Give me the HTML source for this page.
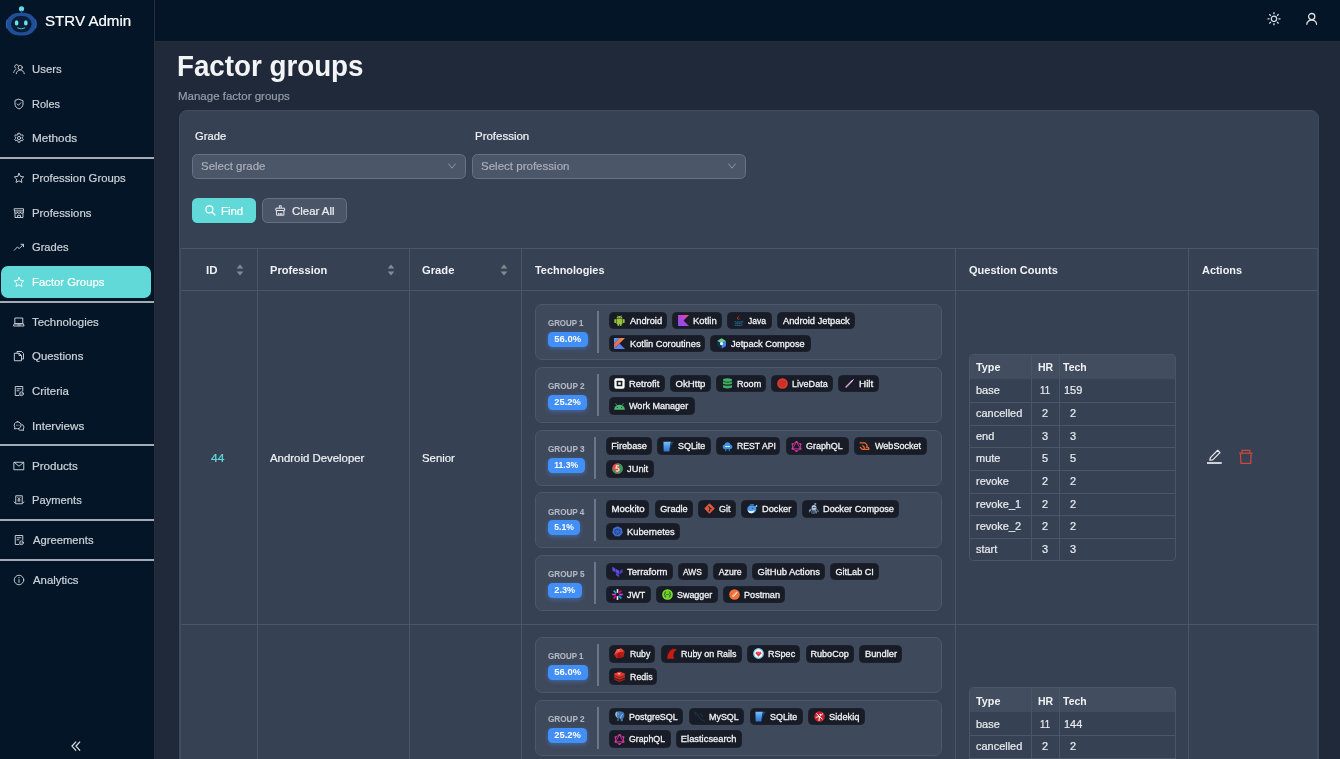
<!DOCTYPE html><html lang="en"><head><meta charset="utf-8"><title>Factor groups - STRV Admin</title><style>
html,body{margin:0;padding:0}
#app{position:absolute;left:0;top:0;width:1340px;height:759px;overflow:hidden;will-change:transform}
body{width:1340px;height:759px;overflow:hidden;background:#20293a;font-family:"Liberation Sans",sans-serif;position:relative}
.b{position:absolute;box-sizing:content-box}
.t{position:absolute;white-space:nowrap;line-height:1;display:block;transform-origin:0 50%;-webkit-text-stroke:0.22px currentColor}
.tag{display:inline-flex;align-items:center;box-sizing:content-box;height:15.6px;margin-right:5.2px;background:#181c26;border:1px solid #1c212c;border-radius:4.5px;
 color:#f1f3f5;font-size:9.3px;line-height:15.6px;padding:0;white-space:nowrap;flex:none}
.tag .ti{margin-left:4.7px;flex:none}
.tag>span{display:inline-block;flex:none;position:relative;top:1px;-webkit-text-stroke:0.3px currentColor}
</style></head><body><div id="app"><div class="b" style="left:0px;top:0px;width:1340px;height:40.8px;background:#031526"></div>
<div class="b" style="left:0px;top:0px;width:154.2px;height:759px;background:#031526"></div>
<div class="b" style="left:154px;top:0px;width:1px;height:759px;background:#2b2d36"></div>
<div class="b" style="left:154px;top:40.9px;width:1186px;height:1px;background:#2b2d36"></div>
<div class="b" style="left:3.9px;top:3.6px;"><svg width="36" height="34" viewBox="0 0 36 34">
<circle cx="17.500" cy="4.800" r="2.600" fill="#5fdde6"/>
<rect x="16.900" y="6.500" width="1.200" height="3" fill="#2a5fa0"/>
<rect x="2.300" y="8.800" width="30" height="22.700" rx="13" ry="11.300" fill="#1f4f95"/>
<path d="M3.400 15.500a3 6 0 0 0 0 9M31.200 15.500a3 6 0 0 1 0 9" fill="none" stroke="#2b62b0" stroke-width="1.200"/>
<rect x="7" y="12.100" width="20.600" height="16.200" rx="9" ry="8" fill="#0b1d3a"/>
<ellipse cx="12.600" cy="18.900" rx="1.850" ry="2.700" fill="#63e6ea"/>
<ellipse cx="21.800" cy="18.900" rx="1.850" ry="2.700" fill="#63e6ea"/>
<path d="M13.600 24q3.600 1.900 7.200 0" fill="none" stroke="#36c9c0" stroke-width="1" stroke-linecap="round"/>
</svg></div>
<span class="t" style="left:44.72px;top:13.00px;font-size:15.2px;transform:scaleX(0.9948);color:#fff;">STRV Admin</span>
<div class="b" style="left:12.9px;top:63.099999999999994px;color:#cdd1d8;line-height:0"><svg width="12" height="12" viewBox="0 0 24 24" ><g fill="none" stroke="currentColor" stroke-width="1.9" stroke-linecap="round" stroke-linejoin="round"><circle cx="14.5" cy="9" r="4.2"/><path d="M6.5 21.5c.6-4.6 3.8-7.3 8-7.3s7.400 2.700 8 7.300"/><path d="M10 4.300a4 4 0 0 0-5.500 5.800"/><path d="M1.500 19c.3-3 1.800-5.300 4.600-6.400"/></g></svg></div>
<span class="t" style="left:31.75px;top:64.00px;font-size:11.8px;transform:scaleX(0.9627);color:#cdd1d8;">Users</span>
<div class="b" style="left:12.9px;top:97.7px;color:#cdd1d8;line-height:0"><svg width="12" height="12" viewBox="0 0 24 24" ><g fill="none" stroke="currentColor" stroke-width="1.9" stroke-linecap="round" stroke-linejoin="round"><path d="M12 2.500 20 5.500v6.500c0 5-3.300 8.300-8 9.800-4.700-1.500-8-4.800-8-9.800V5.500z"/><path d="M8.500 12l2.500 2.600 4.700-5"/></g></svg></div>
<span class="t" style="left:31.72px;top:99.00px;font-size:11.8px;transform:scaleX(0.9308);color:#cdd1d8;">Roles</span>
<div class="b" style="left:12.9px;top:132.2px;color:#cdd1d8;line-height:0"><svg width="12" height="12" viewBox="0 0 24 24" ><g fill="none" stroke="currentColor" stroke-width="1.9" stroke-linecap="round" stroke-linejoin="round"><circle cx="12" cy="12" r="3.200"/><path d="M10.300 2.500h3.400l.6 2.700 2 1.100 2.600-.9 1.700 3-2 1.900v2.300l2 1.900-1.700 3-2.600-.9-2 1.100-.6 2.700h-3.400l-.6-2.700-2-1.100-2.600.9-1.700-3 2-1.900v-2.300l-2-1.900 1.700-3 2.600.9 2-1.100z"/></g></svg></div>
<span class="t" style="left:31.66px;top:133.00px;font-size:11.8px;transform:scaleX(0.9955);color:#cdd1d8;">Methods</span>
<div class="b" style="left:12.9px;top:172.3px;color:#cdd1d8;line-height:0"><svg width="12" height="12" viewBox="0 0 24 24" ><g fill="none" stroke="currentColor" stroke-width="1.9" stroke-linecap="round" stroke-linejoin="round"><path d="M12 2.800l2.900 6 6.500.9-4.700 4.600 1.100 6.500L12 17.700l-5.800 3.100 1.100-6.500L2.600 9.700l6.500-.9z"/></g></svg></div>
<span class="t" style="left:31.69px;top:173.00px;font-size:11.8px;transform:scaleX(0.9590);color:#cdd1d8;">Profession Groups</span>
<div class="b" style="left:12.9px;top:206.8px;color:#cdd1d8;line-height:0"><svg width="12" height="12" viewBox="0 0 24 24" ><g fill="none" stroke="currentColor" stroke-width="1.9" stroke-linecap="round" stroke-linejoin="round"><path d="M3 3.500h18v6.200a3 3 0 0 1-6 0 3 3 0 0 1-6 0 3 3 0 0 1-6 0z"/><path d="M3.200 7.800h17.600"/><path d="M4 12v9h16v-9"/><path d="M9 21v-4.500h6V21"/></g></svg></div>
<span class="t" style="left:31.69px;top:208.00px;font-size:11.8px;transform:scaleX(0.9635);color:#cdd1d8;">Professions</span>
<div class="b" style="left:12.9px;top:241.3px;color:#cdd1d8;line-height:0"><svg width="12" height="12" viewBox="0 0 24 24" ><g fill="none" stroke="currentColor" stroke-width="1.9" stroke-linecap="round" stroke-linejoin="round"><path d="M2.500 18.500l6.300-6.500 3.700 3.200 8-8.200"/><path d="M16 6.500h5v5"/></g></svg></div>
<span class="t" style="left:32.04px;top:242.00px;font-size:11.8px;transform:scaleX(0.9443);color:#cdd1d8;">Grades</span>
<div class="b" style="left:0.8px;top:266.09999999999997px;width:150.2px;height:31.6px;background:#62d9d9;border-radius:7px"></div>
<div class="b" style="left:12.9px;top:275.9px;color:#fff;line-height:0"><svg width="12" height="12" viewBox="0 0 24 24" ><g fill="none" stroke="currentColor" stroke-width="1.9" stroke-linecap="round" stroke-linejoin="round"><path d="M12 2.800l2.900 6 6.500.9-4.700 4.600 1.100 6.500L12 17.700l-5.800 3.100 1.100-6.500L2.600 9.700l6.500-.9z"/></g></svg></div>
<span class="t" style="left:31.69px;top:277.00px;font-size:11.8px;transform:scaleX(0.9602);color:#fff;">Factor Groups</span>
<div class="b" style="left:12.9px;top:315.8px;color:#cdd1d8;line-height:0"><svg width="12" height="12" viewBox="0 0 24 24" ><g fill="none" stroke="currentColor" stroke-width="1.9" stroke-linecap="round" stroke-linejoin="round"><path d="M4.500 4h15v11.500h-15z"/><path d="M1.800 20h20.400l-1.500-4.500H3.300z"/><path d="M9.500 18h5"/></g></svg></div>
<span class="t" style="left:32.37px;top:317.00px;font-size:11.8px;transform:scaleX(0.9698);color:#cdd1d8;">Technologies</span>
<div class="b" style="left:12.9px;top:350.4px;color:#cdd1d8;line-height:0"><svg width="12" height="12" viewBox="0 0 24 24" ><g fill="none" stroke="currentColor" stroke-width="1.9" stroke-linecap="round" stroke-linejoin="round"><path d="M8 5.500V3h9l4 4v11h-4"/><path d="M3.500 6.500h9l4.500 4.500v10.500H3.500z"/><path d="M12 6.800V11h4.500"/></g></svg></div>
<span class="t" style="left:32.09px;top:351.00px;font-size:11.8px;transform:scaleX(0.9672);color:#cdd1d8;">Questions</span>
<div class="b" style="left:12.9px;top:384.9px;color:#cdd1d8;line-height:0"><svg width="12" height="12" viewBox="0 0 24 24" ><g fill="none" stroke="currentColor" stroke-width="1.9" stroke-linecap="round" stroke-linejoin="round"><path d="M12 21H4.500V3h15v9"/><path d="M8 7.500h8M8 11.500h4"/><circle cx="17" cy="17.500" r="3.800"/><path d="M15.500 17.500l1.200 1.200 2-2.200" stroke-width="1.300"/></g></svg></div>
<span class="t" style="left:32.03px;top:386.00px;font-size:11.8px;transform:scaleX(0.9704);color:#cdd1d8;">Criteria</span>
<div class="b" style="left:12.9px;top:419.5px;color:#cdd1d8;line-height:0"><svg width="12" height="12" viewBox="0 0 24 24" ><g fill="none" stroke="currentColor" stroke-width="1.9" stroke-linecap="round" stroke-linejoin="round"><path d="M9.500 3.500a7 7 0 0 0-5.800 10.900L3 18l3.500-1a7 7 0 1 0 3-13.500z"/><path d="M17.500 8.500a6 6 0 0 1 3 9.500l.5 3-3-1a6 6 0 0 1-6.500-.5"/><path d="M6.800 10.500h.1M9.500 10.500h.1M12.200 10.500h.1" stroke-width="1.500"/></g></svg></div>
<span class="t" style="left:31.55px;top:421.00px;font-size:11.8px;transform:scaleX(0.9840);color:#cdd1d8;">Interviews</span>
<div class="b" style="left:12.9px;top:459.5px;color:#cdd1d8;line-height:0"><svg width="12" height="12" viewBox="0 0 24 24" ><g fill="none" stroke="currentColor" stroke-width="1.9" stroke-linecap="round" stroke-linejoin="round"><path d="M2.500 4.500h19v15h-19z"/><path d="M3 5l9 7.500L21 5"/></g></svg></div>
<span class="t" style="left:31.67px;top:461.00px;font-size:11.8px;transform:scaleX(0.9846);color:#cdd1d8;">Products</span>
<div class="b" style="left:12.9px;top:494.2px;color:#cdd1d8;line-height:0"><svg width="12" height="12" viewBox="0 0 24 24" ><g fill="none" stroke="currentColor" stroke-width="1.9" stroke-linecap="round" stroke-linejoin="round"><path d="M5.500 17.500V3.500h13v14"/><path d="M2.500 16l3 3.500h13l3-3.500"/><path d="M9.500 6.500l2.500 4 2.500-4M12 10.500v5M9.800 11.500h4.400M9.800 13.500h4.400" stroke-width="1.400"/></g></svg></div>
<span class="t" style="left:31.70px;top:495.00px;font-size:11.8px;transform:scaleX(0.9492);color:#cdd1d8;">Payments</span>
<div class="b" style="left:12.9px;top:534.1px;color:#cdd1d8;line-height:0"><svg width="12" height="12" viewBox="0 0 24 24" ><g fill="none" stroke="currentColor" stroke-width="1.9" stroke-linecap="round" stroke-linejoin="round"><path d="M12 21H4.500V3h15v9"/><path d="M8 7.500h8M8 11.500h4"/><circle cx="17" cy="17.500" r="3.800"/><path d="M15.500 17.500l1.200 1.200 2-2.200" stroke-width="1.300"/></g></svg></div>
<span class="t" style="left:32.60px;top:535.00px;font-size:11.8px;transform:scaleX(0.9511);color:#cdd1d8;">Agreements</span>
<div class="b" style="left:12.9px;top:574.0px;color:#cdd1d8;line-height:0"><svg width="12" height="12" viewBox="0 0 24 24" ><g fill="none" stroke="currentColor" stroke-width="1.9" stroke-linecap="round" stroke-linejoin="round"><circle cx="12" cy="12" r="9.500"/><path d="M12 11v6"/><path d="M12 7.200v.1" stroke-width="2.400"/></g></svg></div>
<span class="t" style="left:32.60px;top:575.00px;font-size:11.8px;transform:scaleX(0.9639);color:#cdd1d8;">Analytics</span>
<div class="b" style="left:0px;top:157.25px;width:154.2px;height:1.7px;background:#a4abb6"></div>
<div class="b" style="left:0px;top:301.04999999999995px;width:154.2px;height:1.7px;background:#a4abb6"></div>
<div class="b" style="left:0px;top:444.25px;width:154.2px;height:1.7px;background:#a4abb6"></div>
<div class="b" style="left:0px;top:519.25px;width:154.2px;height:1.7px;background:#a4abb6"></div>
<div class="b" style="left:0px;top:559.25px;width:154.2px;height:1.7px;background:#a4abb6"></div>
<div class="b" style="left:71.4px;top:741.4px;color:#d9dce1;line-height:0"><svg width="10" height="10" viewBox="0 0 10 10" ><g fill="none" stroke="currentColor" stroke-width="1.300"><path d="M5.100 .600 1 5.100l4.100 4.500"/><path d="M9.100 .600 5 5.100l4.100 4.500"/></g></svg></div>
<div class="b" style="left:1267px;top:12px;color:#dcdfe5;line-height:0"><svg width="14" height="14" viewBox="0 0 14 14" ><g fill="none" stroke="currentColor"><circle cx="6.970" cy="6.850" r="2.700" stroke-width="1.200"/><path d="M11.47 6.85L13.47 6.85M10.15 10.03L11.57 11.45M6.97 11.35L6.97 13.35M3.79 10.03L2.37 11.45M2.47 6.85L0.47 6.85M3.79 3.67L2.37 2.25M6.97 2.35L6.97 0.35M10.15 3.67L11.57 2.25" stroke-width="1.300"/></g></svg></div>
<div class="b" style="left:1305px;top:12px;color:#dcdfe5;line-height:0"><svg width="14" height="14" viewBox="0 0 14 14" ><g fill="none" stroke="currentColor" stroke-width="1.300" stroke-linecap="round"><circle cx="6.700" cy="4.600" r="3.100"/><path d="M1.850 12.300A4.850 4.300 0 0 1 11.550 12.300"/></g></svg></div>
<span class="t" style="left:177.10px;top:52.00px;font-size:29px;transform:scaleX(0.9566);color:#f3f4f6;font-weight:700;-webkit-text-stroke:0;">Factor groups</span>
<span class="t" style="left:177.68px;top:91.00px;font-size:11.8px;transform:scaleX(0.9748);color:#949caa;">Manage factor groups</span>
<div class="b" style="left:178.5px;top:110.2px;width:1138px;height:700px;background:#364153;border:1px solid #3f4a5c;border-radius:8px"></div>
<span class="t" style="left:195.44px;top:131.00px;font-size:11.8px;transform:scaleX(0.9514);color:#f0f2f5;">Grade</span>
<span class="t" style="left:475.18px;top:131.00px;font-size:11.8px;transform:scaleX(0.9733);color:#f0f2f5;">Profession</span>
<div class="b" style="left:192px;top:153.8px;width:271.6px;height:23px;background:#4b5668;border:1px solid #667288;border-radius:5.5px"></div>
<span class="t" style="left:200.88px;top:161.00px;font-size:11.8px;transform:scaleX(0.9731);color:#a9aeb8;">Select grade</span>
<div class="b" style="left:448.2px;top:163.3px;color:#8d96a4;line-height:0"><svg width="8" height="6" viewBox="0 0 8 6"><path d="M.400 .600 4 5.200 7.600 .600" fill="none" stroke="currentColor" stroke-width="1"/></svg></div>
<div class="b" style="left:472px;top:153.8px;width:271.6px;height:23px;background:#4b5668;border:1px solid #667288;border-radius:5.5px"></div>
<span class="t" style="left:480.88px;top:161.00px;font-size:11.8px;transform:scaleX(0.9775);color:#a9aeb8;">Select profession</span>
<div class="b" style="left:728.2px;top:163.3px;color:#8d96a4;line-height:0"><svg width="8" height="6" viewBox="0 0 8 6"><path d="M.400 .600 4 5.200 7.600 .600" fill="none" stroke="currentColor" stroke-width="1"/></svg></div>
<div class="b" style="left:192px;top:197.8px;width:63.9px;height:24.8px;background:#62d9d9;border-radius:5.5px;box-shadow:0 1.5px 0 rgba(20,80,90,.25)"></div>
<div class="b" style="left:204.6px;top:205.4px;color:#fff;line-height:0"><svg width="11" height="11" viewBox="0 0 11 11" ><g fill="none" stroke="currentColor" stroke-width="1.150" stroke-linecap="round"><circle cx="4.400" cy="4.400" r="3.500"/><path d="M7 7l3 3"/></g></svg></div>
<span class="t" style="left:221.09px;top:206.00px;font-size:11.8px;transform:scaleX(0.9625);color:#fff;">Find</span>
<div class="b" style="left:262.2px;top:197.8px;width:82.5px;height:22.8px;background:#4a5568;border:1px solid #647084;border-radius:5.5px"></div>
<div class="b" style="left:274.8px;top:205px;color:#e5e7eb;line-height:0"><svg width="11" height="11" viewBox="0 0 11 11" ><g fill="none" stroke="currentColor" stroke-width="1" stroke-linejoin="round"><path d="M4.300 3.200V.700h1.900v2.500"/><path d="M.900 3.200h8.700v2.300H.900z"/><path d="M1.600 5.500v4.700h7.300V5.500"/><path d="M3.700 10.200V8M5.250 10.200V8M6.800 10.200V8"/></g></svg></div>
<span class="t" style="left:291.53px;top:206.00px;font-size:11.8px;transform:scaleX(0.9685);color:#eceef1;">Clear All</span>
<div class="b" style="left:179.5px;top:248.2px;width:1138px;height:1px;background:#4a5565"></div>
<div class="b" style="left:179.5px;top:290.2px;width:1138px;height:1px;background:#4a5565"></div>
<div class="b" style="left:179.5px;top:624px;width:1138px;height:1px;background:#4a5565"></div>
<div class="b" style="left:1316.6px;top:248.2px;width:1px;height:520px;background:#434e61"></div>
<div class="b" style="left:179.5px;top:248.2px;width:1px;height:520px;background:#424d60"></div>
<div class="b" style="left:257.2px;top:248.2px;width:1px;height:520px;background:#4a5565"></div>
<div class="b" style="left:409px;top:248.2px;width:1px;height:520px;background:#4a5565"></div>
<div class="b" style="left:521.4px;top:248.2px;width:1px;height:520px;background:#4a5565"></div>
<div class="b" style="left:955.4px;top:248.2px;width:1px;height:520px;background:#4a5565"></div>
<div class="b" style="left:1188.2px;top:248.2px;width:1px;height:520px;background:#4a5565"></div>
<span class="t" style="left:205.95px;top:265.00px;font-size:11.4px;transform:scaleX(1.0095);color:#f0f2f5;font-weight:700;-webkit-text-stroke:0;">ID</span>
<span class="t" style="left:270.08px;top:265.00px;font-size:11.4px;transform:scaleX(0.9729);color:#f0f2f5;font-weight:700;-webkit-text-stroke:0;">Profession</span>
<span class="t" style="left:421.95px;top:265.00px;font-size:11.4px;transform:scaleX(0.9830);color:#f0f2f5;font-weight:700;-webkit-text-stroke:0;">Grade</span>
<span class="t" style="left:535.39px;top:265.00px;font-size:11.4px;transform:scaleX(0.9577);color:#f0f2f5;font-weight:700;-webkit-text-stroke:0;">Technologies</span>
<span class="t" style="left:968.56px;top:265.00px;font-size:11.4px;transform:scaleX(0.9679);color:#f0f2f5;font-weight:700;-webkit-text-stroke:0;">Question Counts</span>
<span class="t" style="left:1201.73px;top:265.00px;font-size:11.4px;transform:scaleX(0.9600);color:#f0f2f5;font-weight:700;-webkit-text-stroke:0;">Actions</span>
<div class="b" style="left:236px;top:263.6px;line-height:0"><svg width="8" height="12" viewBox="0 0 8 12"><path d="M4 0.400 7.300 4.400H.7z" fill="#868b93"/><path d="M4 11.400 7.300 7.400H.7z" fill="#868b93"/></svg></div>
<div class="b" style="left:387.2px;top:263.6px;line-height:0"><svg width="8" height="12" viewBox="0 0 8 12"><path d="M4 0.400 7.300 4.400H.7z" fill="#868b93"/><path d="M4 11.400 7.300 7.400H.7z" fill="#868b93"/></svg></div>
<div class="b" style="left:499.7px;top:263.6px;line-height:0"><svg width="8" height="12" viewBox="0 0 8 12"><path d="M4 0.400 7.300 4.400H.7z" fill="#868b93"/><path d="M4 11.400 7.300 7.400H.7z" fill="#868b93"/></svg></div>
<span class="t" style="left:210.96px;top:453.00px;font-size:11.8px;transform:scaleX(1.0185);color:#62d9d9;">44</span>
<span class="t" style="left:270.40px;top:453.00px;font-size:11.8px;transform:scaleX(0.9663);color:#f0f2f5;">Android Developer</span>
<span class="t" style="left:422.29px;top:453.00px;font-size:11.8px;transform:scaleX(0.9625);color:#f0f2f5;">Senior</span>
<div class="b" style="left:1206px;top:449px;color:#e6e8ec;line-height:0"><svg width="16" height="16" viewBox="0 0 16 16" ><g fill="none" stroke="currentColor" stroke-linejoin="round"><path d="M3.800 11.200 4.400 8.600 11.700 1.300 14 3.600 6.700 10.900z" stroke-width="1.250"/><path d="M1 14h14.750" stroke-width="1.750"/></g></svg></div>
<div class="b" style="left:1238px;top:449px;color:#cb483e;line-height:0"><svg width="16" height="16" viewBox="0 0 16 16" ><g fill="none" stroke="currentColor" stroke-width="1.250" stroke-linejoin="round"><path d="M4.100 4V1.300h7.700V4"/><path d="M1.100 4.200h13.400"/><path d="M2.500 4.200 2.900 14.400h9.800L13.100 4.200"/></g></svg></div>
<div class="b" style="left:535px;top:304.2px;width:405px;height:54px;background:#3f495c;border:1px solid #4d5869;border-radius:7px"></div><span class="t" style="left:547.98px;top:319.00px;font-size:8.6px;transform:scaleX(0.9192);color:#b0b7c2;font-weight:700;-webkit-text-stroke:0;-webkit-text-stroke:0.12px currentColor;">GROUP 1</span><div class="b" style="left:548.1px;top:332.0px;width:39.5px;height:15.1px;background:#4290f7;border-radius:4.5px;box-shadow:0 1.5px 4px rgba(66,144,247,.45)"></div><span class="t" style="left:548px;top:332.09999999999997px;width:39.5px;height:15px;line-height:15.4px;text-align:center;font-size:8.8px;font-weight:700;-webkit-text-stroke:0;color:#fff;transform:scaleX(1.0750);transform-origin:50% 50%">56.0%</span><div class="b" style="left:597.0px;top:311.0px;width:1.8px;height:42px;background:#6c7687"></div><div class="b" style="left:608.8000000000001px;top:311.8px;display:flex;white-space:nowrap"><span class="tag" style="width:56.5px"><svg class="ti" width="11" height="11" viewBox="0 0 24 24"><g fill="#97c23c"><path d="M5.500 8.800h13v9.700a1.600 1.600 0 0 1-1.600 1.600H7.100a1.600 1.600 0 0 1-1.600-1.600z"/><path d="M5.500 7.900a6.500 5.900 0 0 1 13 0z"/><rect x=".800" y="8.800" width="3.700" height="8.800" rx="1.850"/><rect x="19.500" y="8.800" width="3.700" height="8.800" rx="1.850"/><rect x="7.600" y="17" width="3.600" height="7" rx="1.800"/><rect x="12.800" y="17" width="3.600" height="7" rx="1.800"/><path d="M7.300.600l1.900 2.900M16.700.600l-1.900 2.900" stroke="#97c23c" stroke-width="1.100"/></g><circle cx="9.200" cy="5.200" r=".85" fill="#181c26"/><circle cx="14.800" cy="5.200" r=".85" fill="#181c26"/></svg><span style="transform:scaleX(1.0006);transform-origin:0 50%;margin-left:4.1px">Android</span></span><span class="tag" style="width:47.3px"><svg class="ti" width="11" height="11" viewBox="0 0 24 24"><defs><linearGradient id="kg" x1="1" y1="0" x2="0" y2="1"><stop offset="0" stop-color="#ef6a4e"/><stop offset=".12" stop-color="#e6479a"/><stop offset=".45" stop-color="#b544d8"/><stop offset="1" stop-color="#7e52ee"/></linearGradient></defs><path d="M0 0h24L12 12l12 12H0z" fill="url(#kg)"/></svg><span style="transform:scaleX(1.0182);transform-origin:0 50%;margin-left:4.1px">Kotlin</span></span><span class="tag" style="width:43.0px"><svg class="ti" width="11" height="11" viewBox="0 0 24 24"><path d="M13.200 .500c2 2.700-3.800 4.600-1.900 7.900.6 1.100 1.300 1.800 1.100 3.200-1.900-1.800-4.100-3.700-3-6.100 1-2 4-2.900 3.800-5z" fill="#d8392c"/><path d="M16 5.800c-2.300 1.100-3.400 2.400-1.800 4.900-.3-1.800.6-2.900 1.800-4.900z" fill="#d8392c"/><path d="M4.500 14.500c3.700 1.300 11.300 1.300 15 0M5.500 18.200c3.200 1.300 9.800 1.300 13 0M4 22c4.200 1.600 11.800 1.600 16 0" fill="none" stroke="#1d6b93" stroke-width="2.100" stroke-linecap="round"/><path d="M19.500 13.500c2.700-.5 3.200 2.700.3 3.800" fill="none" stroke="#1d6b93" stroke-width="1.500"/></svg><span style="transform:scaleX(0.9239);transform-origin:0 50%;margin-left:4.1px">Java</span></span><span class="tag" style="width:76.2px;justify-content:center"><span style="transform:scaleX(1.0018)">Android Jetpack</span></span></div><div class="b" style="left:608.8000000000001px;top:334.5px;display:flex;white-space:nowrap"><span class="tag" style="width:94.5px"><svg class="ti" width="11" height="11" viewBox="0 0 24 24"><defs><linearGradient id="ko1" x1="0" y1="0" x2="1" y2="1"><stop offset="0" stop-color="#3fa3f7"/><stop offset="1" stop-color="#8a6fe8"/></linearGradient><linearGradient id="ko2" x1="1" y1="0" x2="0" y2="1"><stop offset="0" stop-color="#f58f3a"/><stop offset="1" stop-color="#e4586a"/></linearGradient><linearGradient id="ko3" x1="0" y1="1" x2="1" y2="0"><stop offset="0" stop-color="#3b9cf5"/><stop offset="1" stop-color="#7b61e8"/></linearGradient></defs><path d="M0 0h12.500L0 13z" fill="url(#ko1)"/><path d="M12.500 0H24L0 24V13z" fill="url(#ko2)"/><path d="M12 12l12 12H0z" fill="url(#ko3)"/></svg><span style="transform:scaleX(0.9964);transform-origin:0 50%;margin-left:4.1px">Kotlin Coroutines</span></span><span class="tag" style="width:98.2px"><svg class="ti" width="11" height="11" viewBox="0 0 24 24"><path d="M12 .800 21.700 6.400 12 12 2.300 6.400z" fill="#67cf8a"/><path d="M21.700 6.400v11.200L12 23.200V12z" fill="#4285f4"/><path d="M2.300 6.400 12 12v11.200L2.300 17.600z" fill="#0d3050"/><circle cx="12" cy="12.300" r="3.500" fill="#e8f2fb"/></svg><span style="transform:scaleX(0.9901);transform-origin:0 50%;margin-left:4.1px">Jetpack Compose</span></span></div>
<div class="b" style="left:535px;top:366.95px;width:405px;height:54px;background:#3f495c;border:1px solid #4d5869;border-radius:7px"></div><span class="t" style="left:547.97px;top:382.00px;font-size:8.6px;transform:scaleX(0.9487);color:#b0b7c2;font-weight:700;-webkit-text-stroke:0;-webkit-text-stroke:0.12px currentColor;">GROUP 2</span><div class="b" style="left:548.1px;top:394.75px;width:39.2px;height:15.1px;background:#4290f7;border-radius:4.5px;box-shadow:0 1.5px 4px rgba(66,144,247,.45)"></div><span class="t" style="left:548px;top:394.84999999999997px;width:39.2px;height:15px;line-height:15.4px;text-align:center;font-size:8.8px;font-weight:700;-webkit-text-stroke:0;color:#fff;transform:scaleX(1.0647);transform-origin:50% 50%">25.2%</span><div class="b" style="left:596.8px;top:373.75px;width:1.8px;height:42px;background:#6c7687"></div><div class="b" style="left:608.6px;top:374.55px;display:flex;white-space:nowrap"><span class="tag" style="width:54.5px"><svg class="ti" width="11" height="11" viewBox="0 0 24 24"><rect x=".800" y=".800" width="22.400" height="22.400" rx="4" fill="#fff"/><rect x="5.800" y="5.800" width="12.400" height="12.400" rx="1.400" fill="#181c26"/><rect x="9.200" y="9.200" width="5.600" height="5.600" rx=".6" fill="#fff"/></svg><span style="transform:scaleX(1.0118);transform-origin:0 50%;margin-left:4.1px">Retrofit</span></span><span class="tag" style="width:38.4px;justify-content:center"><span style="transform:scaleX(1.0308)">OkHttp</span></span><span class="tag" style="width:47.9px"><svg class="ti" width="11" height="11" viewBox="0 0 24 24"><g fill="#43b268"><ellipse cx="12" cy="4.200" rx="10" ry="3.900"/><path d="M2 7.300c2.300 3 17.700 3 20 0v4.800c-2.300 3.100-17.700 3.100-20 0z"/><path d="M2 14.600c2.300 3 17.700 3 20 0v5.200c-2.300 4.200-17.700 4.200-20 0z"/></g><path d="M2 7.800c2.300 2.900 17.700 2.900 20 0M2 15c2.300 2.900 17.700 2.900 20 0" stroke="#1d6e3e" stroke-width="1.100" fill="none"/></svg><span style="transform:scaleX(0.9752);transform-origin:0 50%;margin-left:4.1px">Room</span></span><span class="tag" style="width:60.0px"><svg class="ti" width="11" height="11" viewBox="0.800 0.800 22.400 22.400"><circle cx="12" cy="12" r="10.800" fill="#e23a2e"/><circle cx="12" cy="12" r="7.600" fill="#c83228"/></svg><span style="transform:scaleX(0.9737);transform-origin:0 50%;margin-left:4.1px">LiveData</span></span><span class="tag" style="width:38.4px"><svg class="ti" width="11" height="11" viewBox="0.800 0.800 22.400 22.400"><path d="M5 19L17.500 6.500" stroke="#d9a3e0" stroke-width="3" stroke-linecap="round"/><path d="M15 9l5-5" stroke="#f3e6f5" stroke-width="1.800" stroke-linecap="round"/><path d="M6 15.500l3 3" stroke="#9a6bb0" stroke-width="1.500"/></svg><span style="transform:scaleX(1.0634);transform-origin:0 50%;margin-left:4.1px">Hilt</span></span></div><div class="b" style="left:608.6px;top:397.25px;display:flex;white-space:nowrap"><span class="tag" style="width:84.0px"><svg class="ti" width="11" height="11" viewBox="0.800 0.800 22.400 22.400"><path d="M1 18.500a11 10 0 0 1 22 0z" fill="#4fb66d"/><path d="M6.500 9.500L4.300 6M17.500 9.500L19.700 6" stroke="#4fb66d" stroke-width="1.500" stroke-linecap="round"/><circle cx="7.500" cy="14" r="1.100" fill="#181c26"/><circle cx="16.500" cy="14" r="1.100" fill="#181c26"/></svg><span style="transform:scaleX(0.9730);transform-origin:0 50%;margin-left:4.1px">Work Manager</span></span></div>
<div class="b" style="left:535px;top:429.7px;width:405px;height:54px;background:#3f495c;border:1px solid #4d5869;border-radius:7px"></div><span class="t" style="left:547.97px;top:445.00px;font-size:8.6px;transform:scaleX(0.9477);color:#b0b7c2;font-weight:700;-webkit-text-stroke:0;-webkit-text-stroke:0.12px currentColor;">GROUP 3</span><div class="b" style="left:548.1px;top:457.5px;width:36.5px;height:15.1px;background:#4290f7;border-radius:4.5px;box-shadow:0 1.5px 4px rgba(66,144,247,.45)"></div><span class="t" style="left:548px;top:457.59999999999997px;width:36.5px;height:15px;line-height:15.4px;text-align:center;font-size:8.8px;font-weight:700;-webkit-text-stroke:0;color:#fff;transform:scaleX(0.9825);transform-origin:50% 50%">11.3%</span><div class="b" style="left:594.3px;top:436.5px;width:1.8px;height:42px;background:#6c7687"></div><div class="b" style="left:606.1px;top:437.3px;display:flex;white-space:nowrap"><span class="tag" style="width:44.0px;justify-content:center"><span style="transform:scaleX(0.9869)">Firebase</span></span><span class="tag" style="width:51.5px"><svg class="ti" width="11" height="11" viewBox="0 0 24 24"><defs><linearGradient id="sq" x1="0" y1="0" x2="0" y2="1"><stop offset="0" stop-color="#7fc0f5"/><stop offset=".5" stop-color="#4a97e8"/><stop offset="1" stop-color="#2f74cf"/></linearGradient></defs><path d="M1 1.500h16.500c-2 5.500-3 12.500-3.500 21.500H1.500c-.3-7-.5-14.500-.5-21.500z" fill="url(#sq)"/><path d="M17.500 1.500h6c-4 5-6.500 10-8.500 16.500.400-6 1.200-11.500 2.500-16.500z" fill="#1a4b78"/></svg><span style="transform:scaleX(0.9594);transform-origin:0 50%;margin-left:4.1px">SQLite</span></span><span class="tag" style="width:62.4px"><svg class="ti" width="11" height="11" viewBox="0.800 0.800 22.400 22.400"><path d="M6.500 17.500a4.800 4.800 0 0 1-.6-9.500 6.500 6.500 0 0 1 12.400.2 4.700 4.700 0 0 1-.8 9.300z" fill="#3d8fe0"/><path d="M7 12h10" stroke="#d9ecff" stroke-width="1.600"/><circle cx="9.500" cy="12" r="1.700" fill="#d9ecff"/><circle cx="14.500" cy="12" r="1.700" fill="#d9ecff"/><path d="M8.500 17.500v4M15.500 17.500v4" stroke="#3d8fe0" stroke-width="2"/></svg><span style="transform:scaleX(0.9331);transform-origin:0 50%;margin-left:4.1px">REST API</span></span><span class="tag" style="width:61.0px"><svg class="ti" width="11" height="11" viewBox="0.800 0.800 22.400 22.400"><g fill="none" stroke="#e535ab" stroke-width="1.600"><path d="M12 2.500l8.200 4.750v9.500L12 21.500l-8.200-4.750v-9.500z"/><path d="M12 2.500l8.200 14.250H3.800z"/></g><g fill="#e535ab"><circle cx="12" cy="2.500" r="2"/><circle cx="20.200" cy="7.250" r="2"/><circle cx="20.200" cy="16.750" r="2"/><circle cx="12" cy="21.500" r="2"/><circle cx="3.800" cy="16.750" r="2"/><circle cx="3.800" cy="7.250" r="2"/></g></svg><span style="transform:scaleX(0.9605);transform-origin:0 50%;margin-left:4.1px">GraphQL</span></span><span class="tag" style="width:70.9px"><svg class="ti" width="11" height="11" viewBox="0 0 24 24"><g fill="none" stroke="#f0682e" stroke-width="2.700" stroke-linejoin="miter"><path d="M1.500 4h11.500l4.500 4.500v4"/><path d="M7.500 9.500l4 4v5h11"/><path d="M15 13.500h4l3.500 3.500"/><path d="M2 13l5.500 5.500H12"/></g></svg><span style="transform:scaleX(0.9706);transform-origin:0 50%;margin-left:4.1px">WebSocket</span></span></div><div class="b" style="left:606.1px;top:460.0px;display:flex;white-space:nowrap"><span class="tag" style="width:46.0px"><svg class="ti" width="11" height="11" viewBox="0.800 0.800 22.400 22.400"><circle cx="12" cy="12" r="10.800" fill="#dc514a"/><path d="M12 1.200a10.800 10.800 0 0 1 0 21.600c3-3 4.500-7 4.500-10.800S15 4.200 12 1.200z" fill="#25a162"/><path d="M1.200 12a10.800 10.800 0 0 0 10.800 10.800c-2-2-4-4-5-6.500z" fill="#25a162" opacity=".9"/><path d="M15 6.500H9.800l-.6 5c3-1.200 6 0 6 2.800 0 3.200-4.200 3.800-6.500 2" fill="none" stroke="#fbeee0" stroke-width="2.200"/></svg><span style="transform:scaleX(1.0014);transform-origin:0 50%;margin-left:4.1px">JUnit</span></span></div>
<div class="b" style="left:535px;top:492.45px;width:405px;height:54px;background:#3f495c;border:1px solid #4d5869;border-radius:7px"></div><span class="t" style="left:547.98px;top:508.00px;font-size:8.6px;transform:scaleX(0.9412);color:#b0b7c2;font-weight:700;-webkit-text-stroke:0;-webkit-text-stroke:0.12px currentColor;">GROUP 4</span><div class="b" style="left:548.1px;top:520.25px;width:32.2px;height:15.1px;background:#4290f7;border-radius:4.5px;box-shadow:0 1.5px 4px rgba(66,144,247,.45)"></div><span class="t" style="left:548px;top:520.35px;width:32.2px;height:15px;line-height:15.4px;text-align:center;font-size:8.8px;font-weight:700;-webkit-text-stroke:0;color:#fff;transform:scaleX(0.9704);transform-origin:50% 50%">5.1%</span><div class="b" style="left:594.3px;top:499.25px;width:1.8px;height:42px;background:#6c7687"></div><div class="b" style="left:606.1px;top:500.05px;display:flex;white-space:nowrap"><span class="tag" style="width:41.4px;justify-content:center"><span style="transform:scaleX(1.0348)">Mockito</span></span><span class="tag" style="width:36.1px;justify-content:center"><span style="transform:scaleX(0.9866)">Gradle</span></span><span class="tag" style="width:36.1px"><svg class="ti" width="11" height="11" viewBox="0 0 24 24"><rect x="3.700" y="3.700" width="16.600" height="16.600" rx="1.800" transform="rotate(45 12 12)" fill="#e0583b"/><path d="M9.300 6.800l5.200 5.200M12 9.500v8" stroke="#181c26" stroke-width="1.500"/><circle cx="12" cy="9.500" r="1.500" fill="#181c26"/><circle cx="12" cy="17" r="1.500" fill="#181c26"/><circle cx="15" cy="12.500" r="1.500" fill="#181c26"/></svg><span style="transform:scaleX(0.9783);transform-origin:0 50%;margin-left:4.1px">Git</span></span><span class="tag" style="width:53.5px"><svg class="ti" width="11" height="11" viewBox="0 0 24 24"><path d="M17.500 9c.5-2.500 2.200-4.300 4.800-5-.3 1.600-.2 2.800.5 4-1.400.3-2.500 1-3.300 2z" fill="#7bbcf3"/><ellipse cx="10.500" cy="13.500" rx="9.800" ry="8.800" fill="#4a98e6"/><path d="M1.500 16c3.500 2.500 10 2.500 15.500-1-1 5-5 7.300-8.500 7.300-3.300 0-6-2.300-7-6.300z" fill="#eef6ff"/><path d="M6 4.500c1.500-1.300 3-1.500 4.500-1M11 3.500c1.500-.7 3-.5 4 .5" stroke="#7bbcf3" stroke-width="1.300" fill="none"/><circle cx="12.500" cy="11.500" r="1.200" fill="#16365c"/></svg><span style="transform:scaleX(0.9966);transform-origin:0 50%;margin-left:4.1px">Docker</span></span><span class="tag" style="width:94.9px"><svg class="ti" width="11" height="11" viewBox="0.800 0.800 22.400 22.400"><ellipse cx="13" cy="10.500" rx="5" ry="5.500" fill="#b9c4d4"/><path d="M8 13c-3 1-4.500 3-4.500 6M10 15c-1 2-1.500 4-1 6.500M13 16v6.500M16 15c1 2 1.800 4 1.500 6.500M18 13c2.500 1 3.500 3 3.500 5.500" stroke="#8b99ae" stroke-width="2" fill="none" stroke-linecap="round"/><rect x="13.500" y="1" width="4" height="3.500" fill="#56a6ee"/><rect x="3" y="14" width="4" height="3.500" fill="#56a6ee"/><rect x="15" y="17" width="4" height="3.500" fill="#3d8fe0"/><circle cx="11.500" cy="10" r="1.200" fill="#1a2230"/><circle cx="15" cy="10" r="1.200" fill="#1a2230"/></svg><span style="transform:scaleX(0.9883);transform-origin:0 50%;margin-left:4.1px">Docker Compose</span></span></div><div class="b" style="left:606.1px;top:522.75px;display:flex;white-space:nowrap"><span class="tag" style="width:71.6px"><svg class="ti" width="11" height="11" viewBox="0.800 0.800 22.400 22.400"><path d="M12 1.200l8.500 4.100 2.100 9.200-5.900 7.300H7.300l-5.900-7.300 2.100-9.200z" fill="#3d6fd6"/><circle cx="12" cy="12.300" r="5.400" fill="none" stroke="#1c2f66" stroke-width="1.300"/><path d="M12 5.500v13.600M5.500 9.300l13 6M18.500 9.300l-13 6" stroke="#24397a" stroke-width="1.100"/><circle cx="12" cy="12.300" r="1.800" fill="#3d6fd6"/></svg><span style="transform:scaleX(1.0022);transform-origin:0 50%;margin-left:4.1px">Kubernetes</span></span></div>
<div class="b" style="left:535px;top:555.2px;width:405px;height:54px;background:#3f495c;border:1px solid #4d5869;border-radius:7px"></div><span class="t" style="left:547.97px;top:570.00px;font-size:8.6px;transform:scaleX(0.9455);color:#b0b7c2;font-weight:700;-webkit-text-stroke:0;-webkit-text-stroke:0.12px currentColor;">GROUP 5</span><div class="b" style="left:548.1px;top:583.0px;width:33.5px;height:15.1px;background:#4290f7;border-radius:4.5px;box-shadow:0 1.5px 4px rgba(66,144,247,.45)"></div><span class="t" style="left:548px;top:583.1px;width:33.5px;height:15px;line-height:15.4px;text-align:center;font-size:8.8px;font-weight:700;-webkit-text-stroke:0;color:#fff;transform:scaleX(1.0391);transform-origin:50% 50%">2.3%</span><div class="b" style="left:594.3px;top:562.0px;width:1.8px;height:42px;background:#6c7687"></div><div class="b" style="left:606.1px;top:562.8000000000001px;display:flex;white-space:nowrap"><span class="tag" style="width:64.7px"><svg class="ti" width="11" height="11" viewBox="0.800 0.800 22.400 22.400"><path d="M1.500 2.500l6.500 3.800v7.500L1.500 10z" fill="#5c4ee5"/><path d="M8.800 6.700l6.500 3.800V18l-6.500-3.800z" fill="#5c4ee5"/><path d="M16.100 10.500l6.400-3.800v7.500L16.100 18z" fill="#4040b2"/><path d="M8.800 15.300l6.500 3.800V23l-6.500-3.800z" fill="#5c4ee5"/></svg><span style="transform:scaleX(1.0176);transform-origin:0 50%;margin-left:4.1px">Terraform</span></span><span class="tag" style="width:27.8px;justify-content:center"><span style="transform:scaleX(0.9014)">AWS</span></span><span class="tag" style="width:31.8px;justify-content:center"><span style="transform:scaleX(0.9372)">Azure</span></span><span class="tag" style="width:70.9px;justify-content:center"><span style="transform:scaleX(1.0127)">GitHub Actions</span></span><span class="tag" style="width:46.6px;justify-content:center"><span style="transform:scaleX(0.9804)">GitLab CI</span></span></div><div class="b" style="left:606.1px;top:585.5000000000001px;display:flex;white-space:nowrap"><span class="tag" style="width:43.0px"><svg class="ti" width="11" height="11" viewBox="0.800 0.800 22.400 22.400"><g stroke-width="3.200" stroke-linecap="butt"><path d="M12 1v7.500" stroke="#fff"/><path d="M12 15.500V23" stroke="#fff"/><path d="M4.200 4.200l5.300 5.300" stroke="#00b9f1"/><path d="M14.500 14.500l5.300 5.300" stroke="#00b9f1"/><path d="M1 12h7.500" stroke="#d63aff"/><path d="M15.500 12H23" stroke="#d63aff"/><path d="M4.200 19.800l5.300-5.300" stroke="#fb015b"/><path d="M14.500 9.500l5.300-5.300" stroke="#fb015b"/></g></svg><span style="transform:scaleX(0.9582);transform-origin:0 50%;margin-left:4.1px">JWT</span></span><span class="tag" style="width:59.7px"><svg class="ti" width="11" height="11" viewBox="0.800 0.800 22.400 22.400"><circle cx="12" cy="12" r="10.800" fill="#85ea2d"/><circle cx="12" cy="12" r="8.800" fill="#6ccf23"/><path d="M9 6.500c-2 0-2 1.500-2 3s-.5 2.200-1.500 2.500c1 .3 1.500 1 1.500 2.500s0 3 2 3M15 6.500c2 0 2 1.500 2 3s.5 2.200 1.500 2.500c-1 .3-1.500 1-1.500 2.500s0 3-2 3" fill="none" stroke="#173647" stroke-width="1.600"/><circle cx="9.700" cy="12" r=".9" fill="#173647"/><circle cx="12" cy="12" r=".9" fill="#173647"/><circle cx="14.300" cy="12" r=".9" fill="#173647"/></svg><span style="transform:scaleX(0.9592);transform-origin:0 50%;margin-left:4.1px">Swagger</span></span><span class="tag" style="width:59.7px"><svg class="ti" width="11" height="11" viewBox="0.800 0.800 22.400 22.400"><circle cx="12" cy="12" r="10.800" fill="#f37036"/><path d="M7 17.500l1-3.500 8.500-8 2 2-8 8.500z" fill="#fde7db"/><path d="M6.500 18l9-10" stroke="#f37036" stroke-width="1"/></svg><span style="transform:scaleX(0.9819);transform-origin:0 50%;margin-left:4.1px">Postman</span></span></div>
<div class="b" style="left:535px;top:637.35px;width:405px;height:54px;background:#3f495c;border:1px solid #4d5869;border-radius:7px"></div><span class="t" style="left:547.98px;top:652.00px;font-size:8.6px;transform:scaleX(0.9192);color:#b0b7c2;font-weight:700;-webkit-text-stroke:0;-webkit-text-stroke:0.12px currentColor;">GROUP 1</span><div class="b" style="left:548.1px;top:665.15px;width:39.5px;height:15.1px;background:#4290f7;border-radius:4.5px;box-shadow:0 1.5px 4px rgba(66,144,247,.45)"></div><span class="t" style="left:548px;top:665.25px;width:39.5px;height:15px;line-height:15.4px;text-align:center;font-size:8.8px;font-weight:700;-webkit-text-stroke:0;color:#fff;transform:scaleX(1.0750);transform-origin:50% 50%">56.0%</span><div class="b" style="left:597.0px;top:644.15px;width:1.8px;height:42px;background:#6c7687"></div><div class="b" style="left:608.8000000000001px;top:644.95px;display:flex;white-space:nowrap"><span class="tag" style="width:44.6px"><svg class="ti" width="11" height="11" viewBox="0 0 24 24"><path d="M6 3l10-2 7 6.500-2.500 12L6 22.500.500 14z" fill="#d42a22"/><path d="M6 3l3.500 7L16 1z" fill="#f47a6c"/><path d="M9.500 10L23 7.500 16 1z" fill="#e8473c"/><path d="M.500 14l9-4L6 3z" fill="#ea5a4d"/><path d="M9.500 10l11 9.500L23 7.500z" fill="#b81d17"/><path d="M.500 14L6 22.500 9.500 10z" fill="#c9231c"/><path d="M9.500 10L6 22.500l14.500-3z" fill="#a5150f"/></svg><span style="transform:scaleX(0.9346);transform-origin:0 50%;margin-left:4.1px">Ruby</span></span><span class="tag" style="width:79.4px"><svg class="ti" width="11" height="11" viewBox="0.800 0.800 22.400 22.400"><path d="M3 22.500h14.500c-1.800-4-2-8.500-.5-12 1-2.500 3-4.500 5.500-5.500-2-2-5-2.500-8-1.500-4 1.400-7.200 5-9 9.500C4.300 16 3.300 19.500 3 22.500z" fill="#cc1a12"/><path d="M14 1.500l.5 1.500M10 3l.8 1.500M6.500 6l1.200 1.200M4 10l1.500.8M2.500 14.500l1.600.4M19 1.800l-.3 1.500M22.500 3l-1 1.200" stroke="#cc1a12" stroke-width="1.500"/></svg><span style="transform:scaleX(0.9574);transform-origin:0 50%;margin-left:4.1px">Ruby on Rails</span></span><span class="tag" style="width:51.2px"><svg class="ti" width="11" height="11" viewBox="0.800 0.800 22.400 22.400"><circle cx="12" cy="12" r="9.800" fill="#fff" stroke="#6cc7ec" stroke-width="2.400"/><path d="M7.500 8.500h9l2 3-6.500 7-6.500-7z" fill="#e23b50"/><path d="M7.500 8.500l4.500 3 4.500-3" fill="none" stroke="#f58a98" stroke-width=".9"/></svg><span style="transform:scaleX(0.9731);transform-origin:0 50%;margin-left:4.1px">RSpec</span></span><span class="tag" style="width:46.6px;justify-content:center"><span style="transform:scaleX(0.9744)">RuboCop</span></span><span class="tag" style="width:40.7px;justify-content:center"><span style="transform:scaleX(1.0032)">Bundler</span></span></div><div class="b" style="left:608.8000000000001px;top:667.6500000000001px;display:flex;white-space:nowrap"><span class="tag" style="width:46.6px"><svg class="ti" width="11" height="11" viewBox="0.800 0.800 22.400 22.400"><path d="M1 15.500l11 4.500 11-4.500v3L12 23 1 18.500z" fill="#a41e11"/><path d="M1 10.500l11 4.500 11-4.500v3.500L12 18.500 1 14z" fill="#c6302b"/><path d="M1 6.500L12 2.500l11 4v3.500L12 14.500 1 10z" fill="#d82c20"/><path d="M1 6.500L12 2.500l11 4L12 11z" fill="#e8453a"/><path d="M8 6.500l3-1.200 3 1.200-3 1.200z" fill="#fff"/><path d="M15 5l3 1-2 1z" fill="#7a0c00"/></svg><span style="transform:scaleX(0.9519);transform-origin:0 50%;margin-left:4.1px">Redis</span></span></div>
<div class="b" style="left:535px;top:700.1px;width:405px;height:54px;background:#3f495c;border:1px solid #4d5869;border-radius:7px"></div><span class="t" style="left:547.97px;top:715.00px;font-size:8.6px;transform:scaleX(0.9487);color:#b0b7c2;font-weight:700;-webkit-text-stroke:0;-webkit-text-stroke:0.12px currentColor;">GROUP 2</span><div class="b" style="left:548.1px;top:727.9px;width:39.2px;height:15.1px;background:#4290f7;border-radius:4.5px;box-shadow:0 1.5px 4px rgba(66,144,247,.45)"></div><span class="t" style="left:548px;top:728.0px;width:39.2px;height:15px;line-height:15.4px;text-align:center;font-size:8.8px;font-weight:700;-webkit-text-stroke:0;color:#fff;transform:scaleX(1.0647);transform-origin:50% 50%">25.2%</span><div class="b" style="left:596.8px;top:706.9px;width:1.8px;height:42px;background:#6c7687"></div><div class="b" style="left:608.6px;top:707.7px;display:flex;white-space:nowrap"><span class="tag" style="width:72.8px"><svg class="ti" width="11" height="11" viewBox="0.800 0.800 22.400 22.400"><path d="M6 2.500c4-2 9.500-1.500 13 .5 2.500 1.500 3.500 5 2.500 8.500-.5 2-1.500 4-3 5l.5 4c-1 1.500-3.500 1.500-4.500 0l-.5-4.500c-2 .5-4 0-5.500-1C5 13.500 3 10 3.500 6.500 3.800 4.600 4.700 3.200 6 2.500z" fill="#3d78b5"/><path d="M6 2.500C4.700 3.200 3.800 4.600 3.500 6.500 3 10 5 13.500 8.500 15c-1.500-3-2-7-1-10 .3-1 .8-1.800 1.500-2.300-1.100-.5-2.100-.6-3-.200z" fill="#8fb7dc"/><path d="M14 16c.5-4 2-7 4.500-9" fill="none" stroke="#dbe9f6" stroke-width="1.200"/><circle cx="9.500" cy="7" r="1" fill="#fff"/><path d="M9 15.500v5.500" stroke="#8fb7dc" stroke-width="1.600"/></svg><span style="transform:scaleX(0.9634);transform-origin:0 50%;margin-left:4.1px">PostgreSQL</span></span><span class="tag" style="width:53.8px"><svg class="ti" width="11" height="11" viewBox="0.800 0.800 22.400 22.400"><path d="M2 3c3 0 5 2 6.500 5 1.500 3 2.500 6.500 5 9 1.500 1.500 3.500 2 5.500 2.500l3 2M2 3c1 3 1.500 5.500 3.500 7.500M14 6.500c2 1 3.500 3 4 6" fill="none" stroke="#17455f" stroke-width="1.500" stroke-linecap="round"/></svg><span style="transform:scaleX(0.9602);transform-origin:0 50%;margin-left:4.1px">MySQL</span></span><span class="tag" style="width:51.5px"><svg class="ti" width="11" height="11" viewBox="0 0 24 24"><defs><linearGradient id="sq" x1="0" y1="0" x2="0" y2="1"><stop offset="0" stop-color="#7fc0f5"/><stop offset=".5" stop-color="#4a97e8"/><stop offset="1" stop-color="#2f74cf"/></linearGradient></defs><path d="M1 1.500h16.500c-2 5.500-3 12.500-3.500 21.500H1.500c-.3-7-.5-14.500-.5-21.500z" fill="url(#sq)"/><path d="M17.500 1.500h6c-4 5-6.500 10-8.500 16.500.400-6 1.200-11.500 2.500-16.500z" fill="#1a4b78"/></svg><span style="transform:scaleX(0.9594);transform-origin:0 50%;margin-left:4.1px">SQLite</span></span><span class="tag" style="width:54.5px"><svg class="ti" width="11" height="11" viewBox="0.800 0.800 22.400 22.400"><circle cx="12" cy="12" r="10.800" fill="#c8202d"/><path d="M12 12L6 6.500M12 12l6.500-5.500M12 12l-1 8.500M12 12l-7 1.500M12 12l5.500 5" stroke="#fff" stroke-width="2" stroke-linecap="round"/><circle cx="13.500" cy="8" r="1.700" fill="#fff"/></svg><span style="transform:scaleX(0.9991);transform-origin:0 50%;margin-left:4.1px">Sidekiq</span></span></div><div class="b" style="left:608.6px;top:730.4000000000001px;display:flex;white-space:nowrap"><span class="tag" style="width:60.3px"><svg class="ti" width="11" height="11" viewBox="0.800 0.800 22.400 22.400"><g fill="none" stroke="#e535ab" stroke-width="1.600"><path d="M12 2.500l8.200 4.750v9.500L12 21.500l-8.200-4.750v-9.500z"/><path d="M12 2.500l8.200 14.250H3.800z"/></g><g fill="#e535ab"><circle cx="12" cy="2.500" r="2"/><circle cx="20.200" cy="7.250" r="2"/><circle cx="20.200" cy="16.750" r="2"/><circle cx="12" cy="21.500" r="2"/><circle cx="3.800" cy="16.750" r="2"/><circle cx="3.800" cy="7.250" r="2"/></g></svg><span style="transform:scaleX(0.9419);transform-origin:0 50%;margin-left:4.1px">GraphQL</span></span><span class="tag" style="width:63.7px;justify-content:center"><span style="transform:scaleX(1.0067)">Elasticsearch</span></span></div>
<div class="b" style="left:969px;top:353.8px;width:204.5px;height:204.9px;border:1px solid #4a5565;border-radius:4px;overflow:hidden"></div><div class="b" style="left:970px;top:354.8px;width:204.5px;height:24.3px;background:#424d5f;border-radius:3px 3px 0 0"></div><div class="b" style="left:1031px;top:354.8px;width:1px;height:204.9px;background:#4a5565"></div><div class="b" style="left:1058.8px;top:354.8px;width:1px;height:204.9px;background:#4a5565"></div><span class="t" style="left:975.89px;top:363.00px;font-size:10.4px;transform:scaleX(1.0395);color:#f0f2f5;font-weight:700;-webkit-text-stroke:0;">Type</span><span class="t" style="left:1037.51px;top:363.00px;font-size:10.4px;transform:scaleX(1.0148);color:#f0f2f5;font-weight:700;-webkit-text-stroke:0;">HR</span><span class="t" style="left:1063.09px;top:363.00px;font-size:10.4px;transform:scaleX(1.0098);color:#f0f2f5;font-weight:700;-webkit-text-stroke:0;">Tech</span><span class="t" style="left:975.59px;top:386.00px;font-size:10.4px;transform:scaleX(1.0550);color:#e8eaee;">base</span><span class="t" style="left:1040.28px;top:386.00px;font-size:10.4px;transform:scaleX(0.9248);color:#e8eaee;">11</span><span class="t" style="left:1064.00px;top:386.00px;font-size:10.4px;transform:scaleX(1.0550);color:#e8eaee;">159</span><div class="b" style="left:970px;top:401.8px;width:204.5px;height:1px;background:#4a5565"></div><span class="t" style="left:975.86px;top:409.00px;font-size:10.4px;transform:scaleX(1.0550);color:#e8eaee;">cancelled</span><span class="t" style="left:1042.36px;top:409.00px;font-size:10.4px;transform:scaleX(1.0550);color:#e8eaee;">2</span><span class="t" style="left:1070.26px;top:409.00px;font-size:10.4px;transform:scaleX(1.0550);color:#e8eaee;">2</span><div class="b" style="left:970px;top:424.5px;width:204.5px;height:1px;background:#4a5565"></div><span class="t" style="left:975.86px;top:432.00px;font-size:10.4px;transform:scaleX(1.0550);color:#e8eaee;">end</span><span class="t" style="left:1042.36px;top:432.00px;font-size:10.4px;transform:scaleX(1.0550);color:#e8eaee;">3</span><span class="t" style="left:1070.26px;top:432.00px;font-size:10.4px;transform:scaleX(1.0550);color:#e8eaee;">3</span><div class="b" style="left:970px;top:447.20000000000005px;width:204.5px;height:1px;background:#4a5565"></div><span class="t" style="left:975.59px;top:454.00px;font-size:10.4px;transform:scaleX(1.0550);color:#e8eaee;">mute</span><span class="t" style="left:1042.36px;top:454.00px;font-size:10.4px;transform:scaleX(1.0550);color:#e8eaee;">5</span><span class="t" style="left:1070.26px;top:454.00px;font-size:10.4px;transform:scaleX(1.0550);color:#e8eaee;">5</span><div class="b" style="left:970px;top:469.90000000000003px;width:204.5px;height:1px;background:#4a5565"></div><span class="t" style="left:975.59px;top:477.00px;font-size:10.4px;transform:scaleX(1.0550);color:#e8eaee;">revoke</span><span class="t" style="left:1042.36px;top:477.00px;font-size:10.4px;transform:scaleX(1.0550);color:#e8eaee;">2</span><span class="t" style="left:1070.26px;top:477.00px;font-size:10.4px;transform:scaleX(1.0550);color:#e8eaee;">2</span><div class="b" style="left:970px;top:492.6px;width:204.5px;height:1px;background:#4a5565"></div><span class="t" style="left:975.59px;top:500.00px;font-size:10.4px;transform:scaleX(1.0550);color:#e8eaee;">revoke_1</span><span class="t" style="left:1042.36px;top:500.00px;font-size:10.4px;transform:scaleX(1.0550);color:#e8eaee;">2</span><span class="t" style="left:1070.26px;top:500.00px;font-size:10.4px;transform:scaleX(1.0550);color:#e8eaee;">2</span><div class="b" style="left:970px;top:515.3px;width:204.5px;height:1px;background:#4a5565"></div><span class="t" style="left:975.59px;top:522.00px;font-size:10.4px;transform:scaleX(1.0550);color:#e8eaee;">revoke_2</span><span class="t" style="left:1042.36px;top:522.00px;font-size:10.4px;transform:scaleX(1.0550);color:#e8eaee;">2</span><span class="t" style="left:1070.26px;top:522.00px;font-size:10.4px;transform:scaleX(1.0550);color:#e8eaee;">2</span><div class="b" style="left:970px;top:538.0px;width:204.5px;height:1px;background:#4a5565"></div><span class="t" style="left:976.03px;top:545.00px;font-size:10.4px;transform:scaleX(1.0550);color:#e8eaee;">start</span><span class="t" style="left:1042.36px;top:545.00px;font-size:10.4px;transform:scaleX(1.0550);color:#e8eaee;">3</span><span class="t" style="left:1070.26px;top:545.00px;font-size:10.4px;transform:scaleX(1.0550);color:#e8eaee;">3</span>
<div class="b" style="left:969px;top:687px;width:204.5px;height:200px;border:1px solid #4a5565;border-radius:4px;overflow:hidden"></div><div class="b" style="left:970px;top:688px;width:204.5px;height:24.3px;background:#424d5f;border-radius:3px 3px 0 0"></div><div class="b" style="left:1031px;top:688px;width:1px;height:91.39999999999999px;background:#4a5565"></div><div class="b" style="left:1058.8px;top:688px;width:1px;height:91.39999999999999px;background:#4a5565"></div><span class="t" style="left:975.89px;top:697.00px;font-size:10.4px;transform:scaleX(1.0395);color:#f0f2f5;font-weight:700;-webkit-text-stroke:0;">Type</span><span class="t" style="left:1037.51px;top:697.00px;font-size:10.4px;transform:scaleX(1.0148);color:#f0f2f5;font-weight:700;-webkit-text-stroke:0;">HR</span><span class="t" style="left:1063.09px;top:697.00px;font-size:10.4px;transform:scaleX(1.0098);color:#f0f2f5;font-weight:700;-webkit-text-stroke:0;">Tech</span><span class="t" style="left:975.59px;top:720.00px;font-size:10.4px;transform:scaleX(1.0550);color:#e8eaee;">base</span><span class="t" style="left:1040.28px;top:720.00px;font-size:10.4px;transform:scaleX(0.9248);color:#e8eaee;">11</span><span class="t" style="left:1063.89px;top:720.00px;font-size:10.4px;transform:scaleX(1.0550);color:#e8eaee;">144</span><div class="b" style="left:970px;top:735.0px;width:204.5px;height:1px;background:#4a5565"></div><span class="t" style="left:975.86px;top:742.00px;font-size:10.4px;transform:scaleX(1.0550);color:#e8eaee;">cancelled</span><span class="t" style="left:1042.36px;top:742.00px;font-size:10.4px;transform:scaleX(1.0550);color:#e8eaee;">2</span><span class="t" style="left:1070.26px;top:742.00px;font-size:10.4px;transform:scaleX(1.0550);color:#e8eaee;">2</span><div class="b" style="left:970px;top:757.6999999999999px;width:204.5px;height:1px;background:#4a5565"></div><span class="t" style="left:975.86px;top:765.00px;font-size:10.4px;transform:scaleX(1.0550);color:#e8eaee;">end</span><span class="t" style="left:1042.36px;top:765.00px;font-size:10.4px;transform:scaleX(1.0550);color:#e8eaee;">3</span><span class="t" style="left:1070.26px;top:765.00px;font-size:10.4px;transform:scaleX(1.0550);color:#e8eaee;">3</span></div></body></html>
